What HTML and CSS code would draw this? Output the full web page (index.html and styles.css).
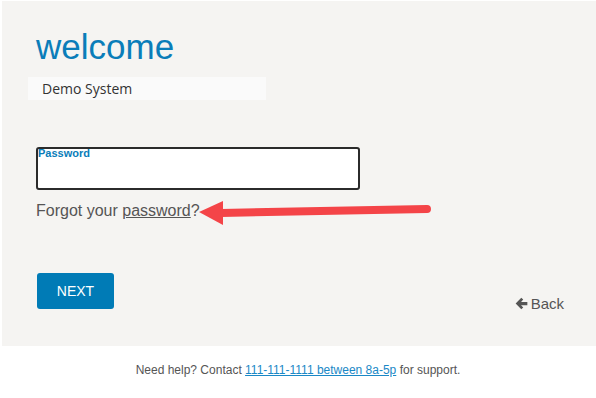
FILE: index.html
```html
<!DOCTYPE html>
<html lang="en">
<head>
  <meta charset="UTF-8">
  <title>Welcome</title>
  <link rel="stylesheet" href="styles.css">
</head>
<body>
  <div class="panel">
    <h1 class="title">welcome</h1>
    <div class="system">Demo System</div>

    <label class="field">
      <span class="field-label">Password</span>
      <input type="password" class="field-input">
    </label>

    <p class="forgot">Forgot your <a href="#">password</a>?</p>

    <div class="actions">
      <button class="next">NEXT</button>
      <a href="#" class="back">
        <svg width="13" height="13" viewBox="0 0 12 12">
          <path d="M5.8 0.6 L0.6 6 L5.8 11.4 L7.6 9.6 L5.6 7.5 H11.4 V4.5 H5.6 L7.6 2.4 Z" fill="#555"/>
        </svg>
        Back
      </a>
    </div>

    <svg class="arrow" width="240" height="34" viewBox="0 0 240 34">
      <line x1="22" y1="16" x2="228" y2="12" stroke="#f44448" stroke-width="8" stroke-linecap="round"/>
      <polygon points="0,15 24,4 24,28" fill="#f44448"/>
    </svg>
  </div>

  <p class="help">Need help? Contact <a href="#">111-111-1111 between 8a-5p</a> for support.</p>
</body>
</html>
```

FILE: styles.css
```css
body {
  margin: 0;
  font-family: "Liberation Sans", Arial, sans-serif;
  background: #fff;
}

.panel {
  position: relative;
  margin: 1px 0 0 2px;
  height: 345px;
  background: #f5f4f2;
  padding: 0 32px 0 26px;
  box-sizing: border-box;
  overflow: hidden;
}

.title {
  margin: 0;
  padding: 26px 0 0 8px;
  font-size: 35px;
  font-weight: normal;
  line-height: 40px;
  color: #0a7db9;
}

.system {
  margin-top: 10px;
  width: 238px;
  height: 23px;
  box-sizing: border-box;
  padding-left: 14px;
  background: #fafafa;
  font-family: "Open Sans", "Noto Sans", sans-serif;
  font-size: 14px;
  line-height: 23px;
  color: #333;
}

.field {
  position: relative;
  display: block;
  margin: 47px 0 0 8px;
  width: 324px;
  height: 43px;
}

.field-label {
  position: absolute;
  left: 2px;
  top: 0;
  font-size: 11px;
  font-weight: bold;
  color: #0a7db9;
}

.field-input {
  width: 100%;
  height: 100%;
  box-sizing: border-box;
  border: 2px solid #2b2b2b;
  border-radius: 3px;
  background: #fff;
  outline: none;
}

.forgot {
  margin: 12px 0 0 8px;
  font-size: 16px;
  color: #555;
}

.forgot a {
  color: #555;
}

.actions {
  display: flex;
  justify-content: space-between;
  align-items: flex-end;
  margin: 53px 0 0 9px;
}

.next {
  width: 77px;
  height: 36px;
  border: none;
  border-radius: 3px;
  background: #007bb6;
  color: #fff;
  font-family: "Liberation Sans", Arial, sans-serif;
  font-size: 14px;
}

.back {
  display: flex;
  align-items: center;
  gap: 3px;
  margin-bottom: -3px;
  font-size: 15px;
  color: #555;
  text-decoration: none;
}

.arrow {
  position: absolute;
  left: 197px;
  top: 196px;
}

.help {
  margin: 17px 0 0;
  text-align: center;
  font-size: 12px;
  color: #555;
}

.help a {
  color: #1a88c6;
}
```
